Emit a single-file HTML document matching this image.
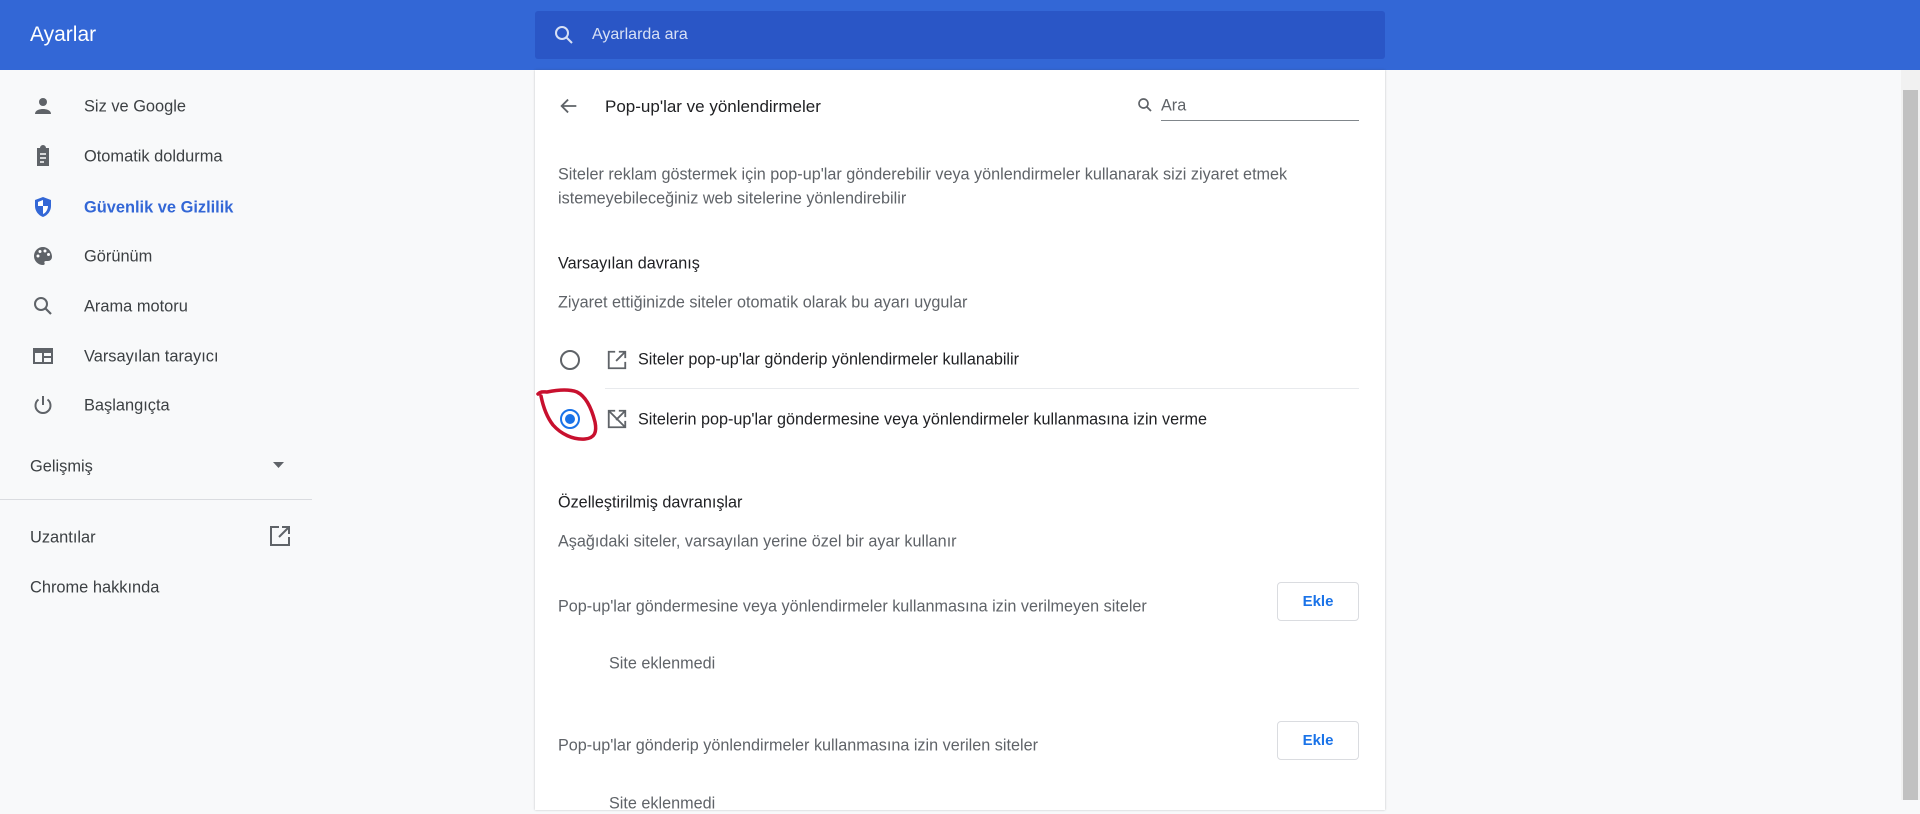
<!DOCTYPE html>
<html><head><meta charset="utf-8"><style>
*{margin:0;padding:0;box-sizing:border-box}
body{width:1920px;height:800px;overflow:hidden;background:#f8f9fa;font-family:"Liberation Sans",sans-serif;color:#202124;position:relative}
.hdr{position:absolute;left:0;top:0;width:1920px;height:70px;background:#3367d6}
.hdr .t{position:absolute;left:30px;top:23px;color:#fff;font-size:21px}
.sb{position:absolute;left:535px;top:11px;width:850px;height:48px;background:#2a56c6;border-radius:3px}
.sb span{position:absolute;left:57px;top:15px;color:#d7e0f5;font-size:16px}
.sb svg{position:absolute;left:17px;top:12px}
.it{position:absolute;left:84px;font-size:16.4px;color:#3c4043;transform:translateY(-50%);margin-top:2px}
.ic{position:absolute;left:31px;transform:translateY(-50%);margin-top:1px}
.card{position:absolute;left:535px;top:70px;width:850px;height:740px;background:#fff;box-shadow:0 0 2px rgba(60,64,67,.3)}
.c{position:absolute;font-size:16.2px;color:#5f6368;transform:translateY(-50%);white-space:nowrap;margin-top:2px}
.d{color:#202124}
.btn{position:absolute;left:742px;width:82px;height:39px;border:1px solid #dadce0;border-radius:4px;color:#1a73e8;font-size:15px;font-weight:bold;text-align:center;line-height:37px;background:#fff}
.scroll{position:absolute;left:1901px;top:70px;width:19px;height:730px;background:#f1f1f1}
.scroll div{position:absolute;left:2px;top:20px;width:15px;height:710px;background:#c1c1c1}
</style></head><body>
<div class="hdr"><div class="t">Ayarlar</div>
<div class="sb"><svg width="24" height="24" viewBox="0 0 24 24"><circle cx="10" cy="10" r="6" fill="none" stroke="#d7e0f5" stroke-width="2"/><path d="M14.5 14.5L20 20" stroke="#d7e0f5" stroke-width="2"/></svg><span>Ayarlarda ara</span></div></div>

<svg class="ic" style="top:105px" width="24" height="24" viewBox="0 0 24 24"><circle cx="12" cy="8" r="4" fill="#5f6368"/><path d="M4 20c0-4 5-5 8-5s8 1 8 5z" fill="#5f6368"/></svg>
<div class="it" style="top:105px">Siz ve Google</div>
<svg class="ic" style="top:155px" width="24" height="24" viewBox="0 0 24 24"><path d="M6 4h3a3 3 0 0 1 6 0h3v18H6z" fill="#5f6368"/><path d="M9 10h6M9 14h6M9 18h4" stroke="#fff" stroke-width="1.5"/></svg>
<div class="it" style="top:155px">Otomatik doldurma</div>
<svg class="ic" style="top:206px" width="24" height="24" viewBox="0 0 24 24"><path d="M12 2l8 3v6c0 5-3.5 9.5-8 11-4.5-1.5-8-6-8-11V5z" fill="#3367d6"/><path d="M12 5v6H7V7zM12 11h5c0 3-2 7-5 8z" fill="#fff"/></svg>
<div class="it" style="top:206px;color:#3367d6;font-weight:bold">Güvenlik ve Gizlilik</div>
<svg class="ic" style="top:255px" width="24" height="24" viewBox="0 0 24 24"><path d="M12 3a9 9 0 0 0 0 18c1.5 0 2-1 1.5-2s0-2 1.5-2h2a4 4 0 0 0 4-4c0-5.5-4-10-9-10z" fill="#5f6368"/><circle cx="7" cy="12" r="1.5" fill="#fff"/><circle cx="9" cy="7.5" r="1.5" fill="#fff"/><circle cx="14" cy="7" r="1.5" fill="#fff"/><circle cx="17.5" cy="10.5" r="1.5" fill="#fff"/></svg>
<div class="it" style="top:255px">Görünüm</div>
<svg class="ic" style="top:305px" width="24" height="24" viewBox="0 0 24 24"><circle cx="10" cy="10" r="6" fill="none" stroke="#5f6368" stroke-width="2"/><path d="M14.5 14.5L20 20" stroke="#5f6368" stroke-width="2.2"/></svg>
<div class="it" style="top:305px">Arama motoru</div>
<svg class="ic" style="top:355px" width="24" height="24" viewBox="0 0 24 24"><rect x="3" y="5" width="18" height="14" fill="none" stroke="#5f6368" stroke-width="2"/><rect x="3" y="5" width="18" height="4" fill="#5f6368"/><path d="M12 9v10M12 13h9" stroke="#5f6368" stroke-width="2"/></svg>
<div class="it" style="top:355px">Varsayılan tarayıcı</div>
<svg class="ic" style="top:404px" width="24" height="24" viewBox="0 0 24 24"><path d="M12 3v9" stroke="#5f6368" stroke-width="2"/><path d="M7.5 6.5a7.5 7.5 0 1 0 9 0" fill="none" stroke="#5f6368" stroke-width="2"/></svg>
<div class="it" style="top:404px">Başlangıçta</div>
<div class="it" style="top:465px;left:30px">Gelişmiş</div>
<svg style="position:absolute;left:273px;top:462px" width="12" height="8"><path d="M0 0h11L5.5 6z" fill="#5f6368"/></svg>
<div style="position:absolute;left:0;top:499px;width:312px;height:1px;background:#dadce0"></div>
<div class="it" style="top:536px;left:30px">Uzantılar</div>
<svg style="position:absolute;left:268px;top:524px" width="24" height="24" viewBox="0 0 24 24"><path d="M11 3H3v18h18v-8" fill="none" stroke="#5f6368" stroke-width="2"/><path d="M14 3h7v7M21 3l-10 10" fill="none" stroke="#5f6368" stroke-width="2"/></svg>
<div class="it" style="top:586px;left:30px">Chrome hakkında</div>

<div class="card">
<svg style="position:absolute;left:23px;top:25px" width="22" height="22" viewBox="0 0 24 24"><path d="M20 12H5M11 5l-7 7 7 7" fill="none" stroke="#5f6368" stroke-width="2"/></svg>
<div class="c d" style="left:70px;top:35px;font-size:17px">Pop-up'lar ve yönlendirmeler</div>
<svg style="position:absolute;left:601px;top:26px" width="18" height="18" viewBox="0 0 24 24"><circle cx="10" cy="10" r="6" fill="none" stroke="#5f6368" stroke-width="2.2"/><path d="M14.5 14.5L20 20" stroke="#5f6368" stroke-width="2.4"/></svg>
<div class="c" style="left:626px;top:34px">Ara</div>
<div style="position:absolute;left:626px;top:50px;width:198px;height:1px;background:#80868b"></div>
<div class="c" style="left:23px;top:103px">Siteler reklam göstermek için pop-up'lar gönderebilir veya yönlendirmeler kullanarak sizi ziyaret etmek</div>
<div class="c" style="left:23px;top:127px">istemeyebileceğiniz web sitelerine yönlendirebilir</div>
<div class="c d" style="left:23px;top:192px">Varsayılan davranış</div>
<div class="c" style="left:23px;top:231px">Ziyaret ettiğinizde siteler otomatik olarak bu ayarı uygular</div>
<div style="position:absolute;left:25px;top:280px;width:20px;height:20px;border:2px solid #5f6368;border-radius:50%"></div>
<svg style="position:absolute;left:71px;top:279px" width="22" height="22" viewBox="0 0 24 24"><path d="M10 3H3v18h18v-7" fill="none" stroke="#5f6368" stroke-width="2"/><path d="M14 3h7v7M21 3l-10 10" fill="none" stroke="#5f6368" stroke-width="2"/></svg>
<div class="c d" style="left:103px;top:288px">Siteler pop-up'lar gönderip yönlendirmeler kullanabilir</div>
<div style="position:absolute;left:70px;top:318px;width:754px;height:1px;background:#e8eaed"></div>
<div style="position:absolute;left:25px;top:339px;width:20px;height:20px;border:2px solid #1a73e8;border-radius:50%"><div style="position:absolute;left:3px;top:3px;width:10px;height:10px;background:#1a73e8;border-radius:50%"></div></div>
<svg style="position:absolute;left:71px;top:338px" width="22" height="22" viewBox="0 0 24 24"><path d="M10 3H3v18h18v-7" fill="none" stroke="#5f6368" stroke-width="2"/><path d="M14 3h7v7M21 3l-10 10M3 3l18 18" fill="none" stroke="#5f6368" stroke-width="2"/></svg>
<div class="c d" style="left:103px;top:348px">Sitelerin pop-up'lar göndermesine veya yönlendirmeler kullanmasına izin verme</div>
<svg style="position:absolute;left:0;top:310px" width="70" height="70" viewBox="0 310 70 70"><path d="M3 324 C6 321 9 322 12 322 C22 320 34 319 42 322 C52 327 57 340 60 352 C62 362 60 368 50 369 C38 370 26 364 18 355 C11 346 8 336 6 326" fill="none" stroke="#c8102e" stroke-width="3.5" stroke-linecap="round" stroke-linejoin="round"/></svg>
<div class="c d" style="left:23px;top:431px">Özelleştirilmiş davranışlar</div>
<div class="c" style="left:23px;top:470px">Aşağıdaki siteler, varsayılan yerine özel bir ayar kullanır</div>
<div class="c" style="left:23px;top:535px">Pop-up'lar göndermesine veya yönlendirmeler kullanmasına izin verilmeyen siteler</div>
<div class="btn" style="top:512px">Ekle</div>
<div class="c" style="left:74px;top:592px">Site eklenmedi</div>
<div class="c" style="left:23px;top:674px">Pop-up'lar gönderip yönlendirmeler kullanmasına izin verilen siteler</div>
<div class="btn" style="top:651px">Ekle</div>
<div class="c" style="left:74px;top:732px">Site eklenmedi</div>
</div>
<div class="scroll"><div></div></div>
</body></html>
